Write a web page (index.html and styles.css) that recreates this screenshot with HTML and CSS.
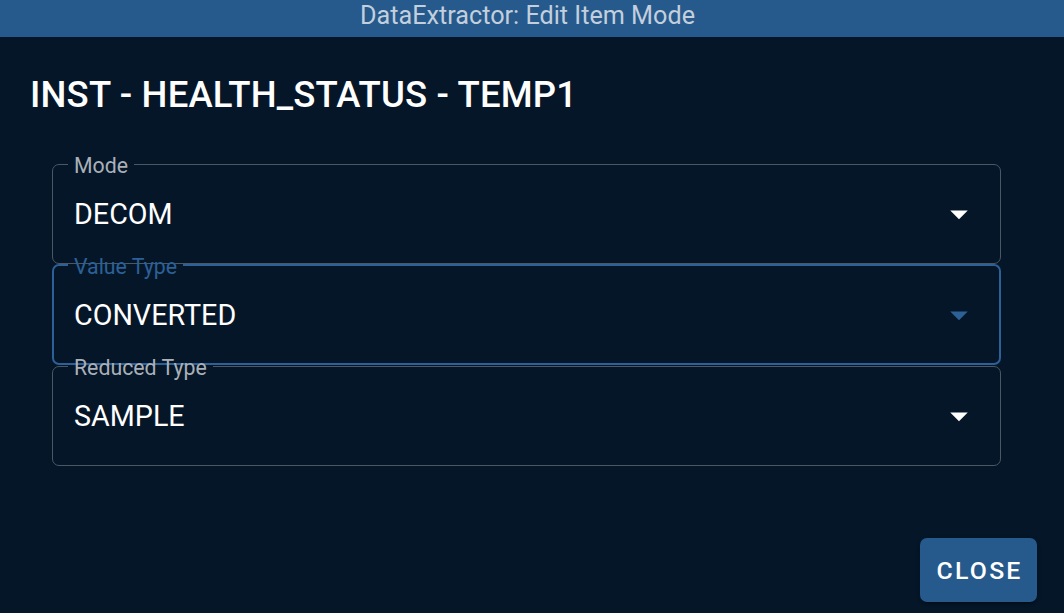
FILE: index.html
```html
<!DOCTYPE html>
<html lang="en">
<head>
<meta charset="utf-8">
<title>DataExtractor: Edit Item Mode</title>
<link rel="stylesheet" href="styles.css">
</head>
<body>
<div class="dialog">
  <div class="titlebar">DataExtractor: Edit Item Mode</div>
  <div class="card">
    <h1 class="heading">INST - HEALTH_STATUS - TEMP1</h1>
    <div class="fields">
      <fieldset class="field">
        <legend class="label">Mode</legend>
        <div class="row">
          <span class="value">DECOM</span>
          <svg class="arrow" viewBox="0 0 24 24" width="42" height="42"><path d="M7,10L12,15L17,10H7Z"/></svg>
        </div>
      </fieldset>
      <fieldset class="field focused">
        <legend class="label">Value Type</legend>
        <div class="row">
          <span class="value">CONVERTED</span>
          <svg class="arrow" viewBox="0 0 24 24" width="42" height="42"><path d="M7,10L12,15L17,10H7Z"/></svg>
        </div>
      </fieldset>
      <fieldset class="field">
        <legend class="label">Reduced Type</legend>
        <div class="row">
          <span class="value">SAMPLE</span>
          <svg class="arrow" viewBox="0 0 24 24" width="42" height="42"><path d="M7,10L12,15L17,10H7Z"/></svg>
        </div>
      </fieldset>
    </div>
    <div class="actions">
      <button class="btn" type="button">CLOSE</button>
    </div>
  </div>
</div>
</body>
</html>
```
FILE: styles.css
```css
* { box-sizing: border-box; }
html, body {
  margin: 0;
  padding: 0;
  height: 100%;
  background: #051628;
  font-family: Roboto, "Noto Sans", "Liberation Sans", sans-serif;
  overflow: hidden;
}
.dialog {
  display: flex;
  flex-direction: column;
  height: 613px;
}
.titlebar {
  height: 37px;
  background: #265a8c;
  color: #c3cfdd;
  font-size: 25.2px;
  line-height: 31px;
  text-align: center;
  padding-right: 9px;
}
.card {
  flex: 1;
  display: flex;
  flex-direction: column;
  background: #051628;
}
.heading {
  margin: 0;
  padding: 30px 0 0 30px;
  font-size: 36.5px;
  font-weight: 500;
  line-height: 56px;
  color: #ffffff;
  letter-spacing: 0.005em;
}
.fields {
  display: flex;
  flex-direction: column;
  margin: 30px 63px 0 52px;
}
.field {
  height: 111px;
  margin: 0;
  padding: 0 20px 0 21px;
  border: 1px solid #4b5764;
  border-radius: 7px;
  min-width: 0;
}
.field + .field { margin-top: -10px; }
.label {
  margin-left: -6px;
  padding: 4px 6px 0;
  font-size: 21.3px;
  line-height: 18px;
  color: #a9b0b8;
}
.row {
  height: 78px;
  display: flex;
  align-items: center;
}
.value {
  flex: 1;
  color: #ffffff;
  font-size: 28.7px;
  line-height: 40px;
}
.arrow { fill: #ffffff; display: block; }
.field.focused {
  border: 2px solid #2c6096;
  padding: 0 19px 0 20px;
}
.field.focused .row { height: 77px; }
.field.focused .label { color: #2c6096; }
.field.focused .arrow { fill: #2c6096; }
.actions {
  margin-top: auto;
  display: flex;
  justify-content: flex-end;
  padding: 0 27px 11px 0;
}
.btn {
  height: 64px;
  width: 117px;
  padding: 0;
  border: none;
  border-radius: 7px;
  background: #265a8c;
  color: #ffffff;
  font-family: Roboto, "Noto Sans", "Liberation Sans", sans-serif;
  font-size: 24.8px;
  font-weight: 500;
  letter-spacing: 0.0892em;
  text-indent: 0.0892em;
  box-shadow: 0 3px 1px -2px rgba(0,0,0,.2), 0 2px 2px 0 rgba(0,0,0,.14), 0 1px 5px 0 rgba(0,0,0,.12);
}
```
